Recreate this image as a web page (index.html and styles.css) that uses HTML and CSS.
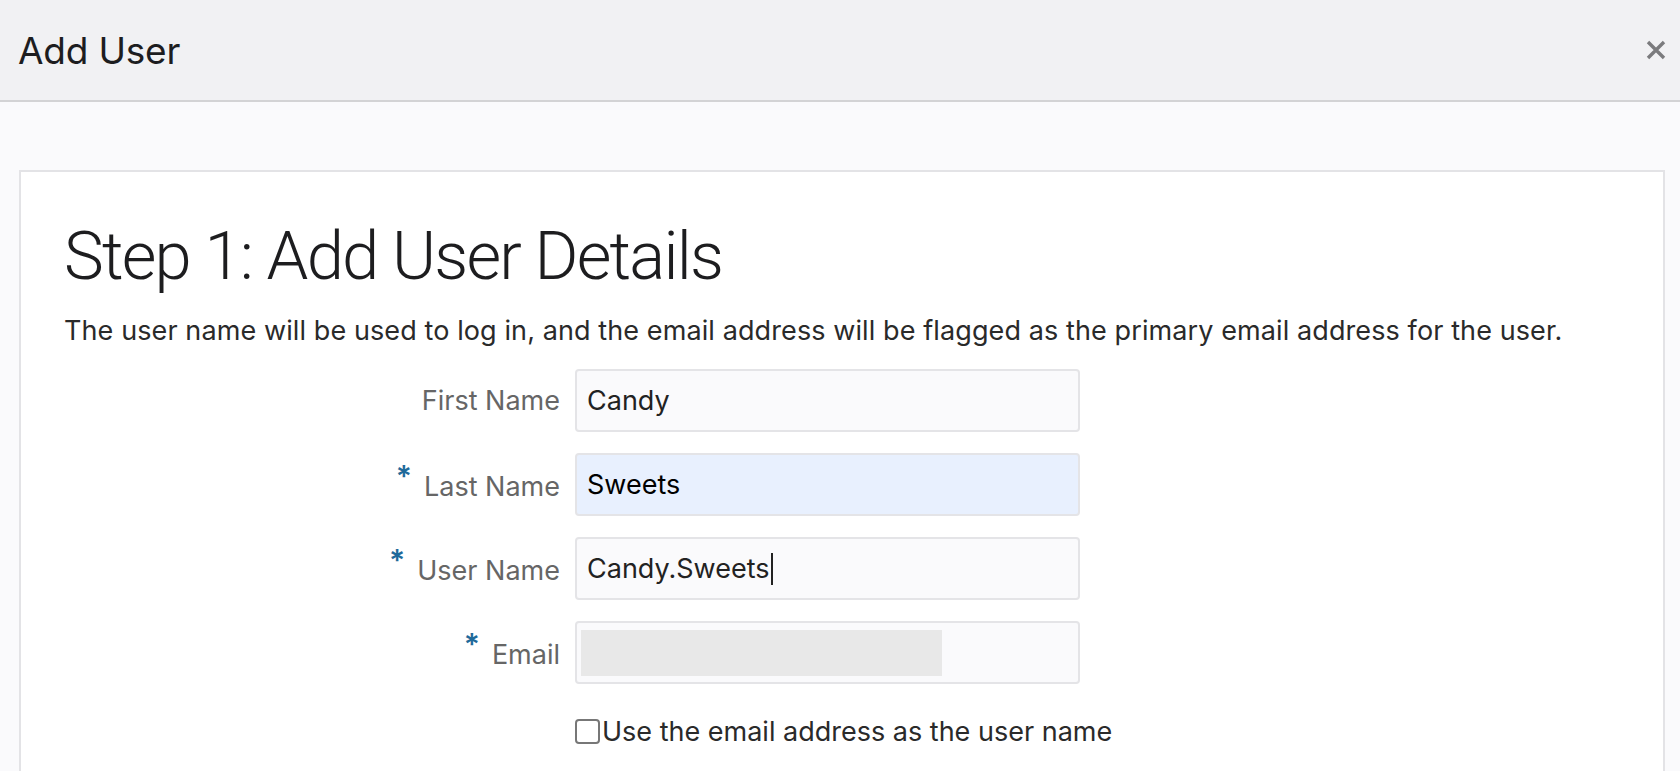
FILE: index.html
```html
<!DOCTYPE html>
<html lang="en">
<head>
<meta charset="utf-8">
<title>Add User</title>
<link rel="stylesheet" href="styles.css">
</head>
<body>
<header class="dialog-header">
  <h1 class="dialog-title">Add User</h1>
  <button class="close-btn" aria-label="Close">
    <svg width="20" height="20" viewBox="0 0 20 20"><path d="M2 2 L18 18 M18 2 L2 18" stroke="#7b7b7d" stroke-width="3.4" stroke-linecap="butt"/></svg>
  </button>
</header>
<main class="dialog-body">
  <section class="card">
    <h2 class="step-title">Step 1: Add User Details</h2>
    <p class="step-desc">The user name will be used to log in, and the email address will be flagged as the primary email address for the user.</p>
    <div class="form">
      <label class="label">First Name</label>
      <div class="field">Candy</div>

      <label class="label"><span class="req">*</span>Last Name</label>
      <div class="field field-autofill">Sweets</div>

      <label class="label"><span class="req">*</span>User Name</label>
      <div class="field">Candy.Sweets<span class="caret"></span></div>

      <label class="label"><span class="req">*</span>Email</label>
      <div class="field field-email"><span class="redacted"></span></div>

      <div class="check-row">
        <span class="checkbox"></span>
        <span class="check-text">Use the email address as the user name</span>
      </div>
    </div>
  </section>
</main>
</body>
</html>
```

FILE: styles.css
```css
* { box-sizing: border-box; }
html, body { margin: 0; padding: 0; }
body {
  background: #fafafc;
  font-family: Inter, "Noto Sans", sans-serif;
  color: #222;
  height: 771px;
  overflow: hidden;
}
.dialog-header {
  height: 102px;
  background: #f1f1f3;
  border-bottom: 2px solid #d3d3d5;
  display: flex;
  align-items: center;
  justify-content: space-between;
  padding: 0 14px 0 18px;
}
.dialog-title {
  margin: 0;
  font-size: 37px;
  font-weight: 400;
  color: #1d1d1f;
  letter-spacing: -0.2px;
  padding-top: 1px;
}
.close-btn {
  border: 0;
  background: transparent;
  padding: 0;
  width: 20px;
  height: 20px;
  display: flex;
}
.dialog-body {
  padding: 68px 15px 0 19px;
}
.card {
  background: #fff;
  border: 2px solid #e3e3e6;
  border-bottom: 0;
  padding: 44px 40px 60px 43px;
  min-height: 700px;
}
.step-title {
  margin: 0;
  font-family: Roboto, Inter, sans-serif;
  font-size: 67px;
  font-weight: 300;
  color: #1d1d1f;
  letter-spacing: -1.8px;
  line-height: 80px;
}
.step-desc {
  margin: 17px 0 20px;
  font-size: 27px;
  color: #2a2a2a;
  line-height: 36px;
  letter-spacing: 0.1px;
  white-space: nowrap;
}
.form {
  display: grid;
  grid-template-columns: 496px 505px;
  column-gap: 15px;
  row-gap: 21px;
  align-items: center;
}
.label {
  text-align: right;
  font-size: 27px;
  color: #666;
  white-space: nowrap;
}
.req {
  color: #1f6a9a;
  margin-right: 12px;
  position: relative;
  top: -9px;
  font-size: 30px;
  font-weight: 600;
}
.field {
  height: 63px;
  border: 2px solid #e4e4e7;
  border-radius: 4px;
  background: #fafafc;
  display: flex;
  align-items: center;
  padding: 0 10px;
  font-size: 27px;
  color: #222;
  white-space: nowrap;
}
.field-autofill {
  background: #e8f0fe;
  color: #000;
}
.caret {
  display: inline-block;
  width: 2px;
  height: 32px;
  background: #222;
  margin-left: 1px;
}
.field-email {
  padding: 4px;
}
.redacted {
  display: block;
  width: 361px;
  height: 46px;
  background: #e8e8e8;
}
.check-row {
  grid-column: 2;
  display: flex;
  align-items: center;
  margin-top: 10px;
  white-space: nowrap;
}
.checkbox {
  width: 25px;
  height: 25px;
  border: 2px solid #777;
  border-radius: 4px;
  background: #fff;
  flex: none;
}
.check-text {
  font-size: 27px;
  color: #2a2a2a;
  margin-left: 2px;
}
```
